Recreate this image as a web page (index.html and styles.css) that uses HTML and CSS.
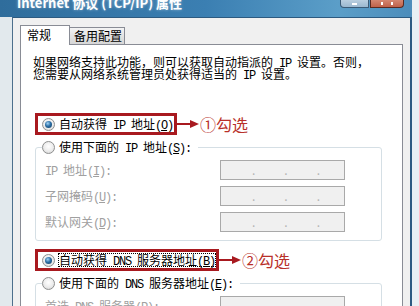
FILE: index.html
```html
<!doctype html>
<html lang="zh-CN">
	<head>
		<meta charset="UTF-8" />
		<meta name="viewport" content="width=device-width, initial-scale=1.0" />
		<title>Internet 协议 (TCP/IP) 属性</title>
		<link rel="stylesheet" href="styles.css">
	</head>
	<body>
		<div class="window">
			<div class="titlebar">
				<div class="title">Internet 协议 (TCP/IP) 属性</div>
				<div class="caption">
					<span class="cap-min"></span>
					<span class="cap-close"></span>
				</div>
			</div>

			<div class="frame">
				<div class="dialog">
					<div class="tabs">
						<div class="tab tab-active">常规</div>
						<div class="tab">备用配置</div>
					</div>

					<div class="panel">
						<p class="intro">如果网络支持此功能，则可以获取自动指派的<span class="en"> IP </span>设置。否则，<br>您需要从网络系统管理员处获得适当的<span class="en"> IP </span>设置。</p>

						<div class="option option-first">
							<div class="pick">
								<span class="radio radio-on"></span>
								<span class="label">自动获得<span class="en"> IP </span>地址<span class="en">(<u>O</u>)</span></span>
							</div>
							<div class="note">
								<svg width="22" height="10" viewBox="0 0 22 10"><path d="M0 5h15" stroke="#a8191f" stroke-width="2"/><path d="M13 1l9 4-9 4z" fill="#a8191f"/></svg>
								<span>①勾选</span>
							</div>
						</div>

						<div class="group">
							<div class="group-head">
								<span class="radio"></span>
								<span class="label">使用下面的<span class="en"> IP </span>地址<span class="en">(<u>S</u>):</span></span>
							</div>
							<div class="field">
								<span><span class="en">IP </span>地址<span class="en">(<u>I</u>):</span></span>
								<span class="ip"><i>.</i><i>.</i><i>.</i></span>
							</div>
							<div class="field">
								<span>子网掩码<span class="en">(<u>U</u>):</span></span>
								<span class="ip"><i>.</i><i>.</i><i>.</i></span>
							</div>
							<div class="field">
								<span>默认网关<span class="en">(<u>D</u>):</span></span>
								<span class="ip"><i>.</i><i>.</i><i>.</i></span>
							</div>
						</div>

						<div class="option">
							<div class="pick">
								<span class="radio radio-on"></span>
								<span class="label label-focus">自动获得<span class="en"> DNS </span>服务器地址<span class="en">(<u>B</u>)</span></span>
							</div>
							<div class="note">
								<svg width="22" height="10" viewBox="0 0 22 10"><path d="M0 5h15" stroke="#a8191f" stroke-width="2"/><path d="M13 1l9 4-9 4z" fill="#a8191f"/></svg>
								<span>②勾选</span>
							</div>
						</div>

						<div class="group">
							<div class="group-head">
								<span class="radio"></span>
								<span class="label">使用下面的<span class="en"> DNS </span>服务器地址<span class="en">(<u>E</u>):</span></span>
							</div>
							<div class="field">
								<span>首选<span class="en"> DNS </span>服务器<span class="en">(<u>P</u>):</span></span>
								<span class="ip"><i>.</i><i>.</i><i>.</i></span>
							</div>
							<div class="field">
								<span>备用<span class="en"> DNS </span>服务器<span class="en">(<u>A</u>):</span></span>
								<span class="ip"><i>.</i><i>.</i><i>.</i></span>
							</div>
						</div>
					</div>
				</div>
			</div>
		</div>
	</body>
</html>
```

FILE: styles.css
```css
* {
	margin: 0;
	padding: 0;
	box-sizing: border-box;
}

body {
	font-family: "Noto Sans CJK SC", "Liberation Sans", sans-serif;
	font-size: 12px;
	color: #000;
	background: #e8f0f4;
	height: 306px;
	overflow: hidden;
}

.window {
	width: 412px;
	height: 306px;
	display: flex;
	flex-direction: column;
	background: #e2e9ed;
}

/* 标题栏 */
.titlebar {
	height: 17px;
	flex: none;
	display: flex;
	justify-content: space-between;
	overflow: hidden;
	background: linear-gradient(to right, #2f6d9c 0%, #3b7fb2 50%, #5b9ec8 82%, #4c8dbb 100%);
}

.title {
	padding-left: 17px;
	margin-top: -5px;
	font-size: 13px;
	font-weight: 700;
	line-height: 15px;
	color: #fff;
	text-shadow: 0 0 3px rgba(255, 255, 255, 0.5);
	white-space: nowrap;
}

.caption {
	display: flex;
	gap: 1px;
	margin-right: 8px;
	height: 8px;
}

.cap-min,
.cap-close {
	display: flex;
	justify-content: center;
	align-items: flex-end;
	padding-bottom: 2px;
	border: 1px solid #3b5b76;
	border-top: none;
}

.cap-min {
	width: 29px;
	background: linear-gradient(#b9cfe0, #9bb8cf);
	border-radius: 0 0 0 4px;
}

.cap-min::after {
	content: "";
	width: 5px;
	height: 2px;
	background: #fff;
}

.cap-close {
	width: 34px;
	background: linear-gradient(#d48670, #c0624a);
	border-color: #5b2a20;
	border-radius: 0 0 4px 0;
}

.cap-close::after {
	content: "";
	width: 8px;
	height: 3px;
	border-left: 2px solid #fff;
	border-right: 2px solid #fff;
}

/* 对话框 */
.frame {
	flex: 1;
	min-height: 0;
	display: flex;
	padding-left: 12px;
}

.dialog {
	flex: 1;
	min-height: 0;
	display: flex;
	flex-direction: column;
	overflow: hidden;
	background: #f0f0f0;
	border-top: 1px solid #2c5a80;
	border-left: 1px solid #4d6f8c;
	border-right: 2px solid #2d5b82;
	padding: 7px 7px 0;
}

.tabs {
	display: flex;
	align-items: flex-end;
	position: relative;
	z-index: 1;
	margin-bottom: -1px;
}

.tab {
	width: 55px;
	height: 18px;
	padding-left: 4px;
	line-height: 16px;
	border: 1px solid #898c95;
	border-left: none;
	background: linear-gradient(#f4f4f4, #e3e3e3 50%, #d6d6d6);
	white-space: nowrap;
}

.tab-active {
	width: 50px;
	height: 20px;
	padding-left: 6px;
	line-height: 18px;
	border-left: 1px solid #898c95;
	border-bottom: none;
	background: #fff;
}

.panel {
	flex: 1;
	background: #fff;
	border: 1px solid #898c95;
	padding: 11px 10px 0 12px;
}

.intro {
	line-height: 12px;
	white-space: nowrap;
}

/* 西文按半角宽度排 */
.en {
	font-family: "Liberation Mono", monospace;
	letter-spacing: -1.2px;
	line-height: 0;
}

/* 单选项 */
.option {
	display: flex;
	align-items: center;
	margin: 8px 0 0 2px;
}

.option-first {
	margin-top: 33px;
}

.pick {
	display: flex;
	align-items: center;
	border: 3px solid #a8191f;
	padding: 1px 0 1px 4px;
}

.radio {
	width: 13px;
	height: 13px;
	flex: none;
	display: flex;
	align-items: center;
	justify-content: center;
	margin-right: 3px;
	border: 1px solid #8e8f8f;
	border-radius: 50%;
	background: radial-gradient(circle at 50% 40%, #fff, #ececec 55%, #cdcdcd);
}

.radio-on::after {
	content: "";
	width: 7px;
	height: 7px;
	border-radius: 50%;
	background: radial-gradient(circle at 40% 35%, #a3d4f5, #2b6ea5 45%, #123a5c);
}

.label {
	line-height: 12px;
	border: 1px dotted transparent;
	white-space: nowrap;
}

.label-focus {
	border-color: #000;
}

.note {
	display: flex;
	align-items: center;
	color: #b8302a;
	font-size: 16px;
	line-height: 18px;
	white-space: nowrap;
}

.note svg {
	margin-right: 1px;
}

/* 分组框 */
.group {
	margin: 12px 10px 0 2px;
	border: 1px solid #d5dfe5;
	border-radius: 3px;
	padding: 0 0 8px 9px;
}

.group-head {
	display: flex;
	align-items: center;
	width: max-content;
	height: 16px;
	margin: -9px 0 5px -3px;
	padding-right: 6px;
	background: #fff;
}

.field {
	display: grid;
	grid-template-columns: 175px 125px;
	align-items: center;
	height: 20px;
	line-height: 12px;
	color: #a0a0a0;
	white-space: nowrap;
}

.field + .field {
	margin-top: 6px;
}

.ip {
	height: 20px;
	display: flex;
	align-items: center;
	gap: 29px;
	padding-left: 31px;
	border: 1px solid #a9a9a9;
	background: #f0f0f0;
	color: #b4b4b4;
}

.ip i {
	font-style: normal;
}
```
